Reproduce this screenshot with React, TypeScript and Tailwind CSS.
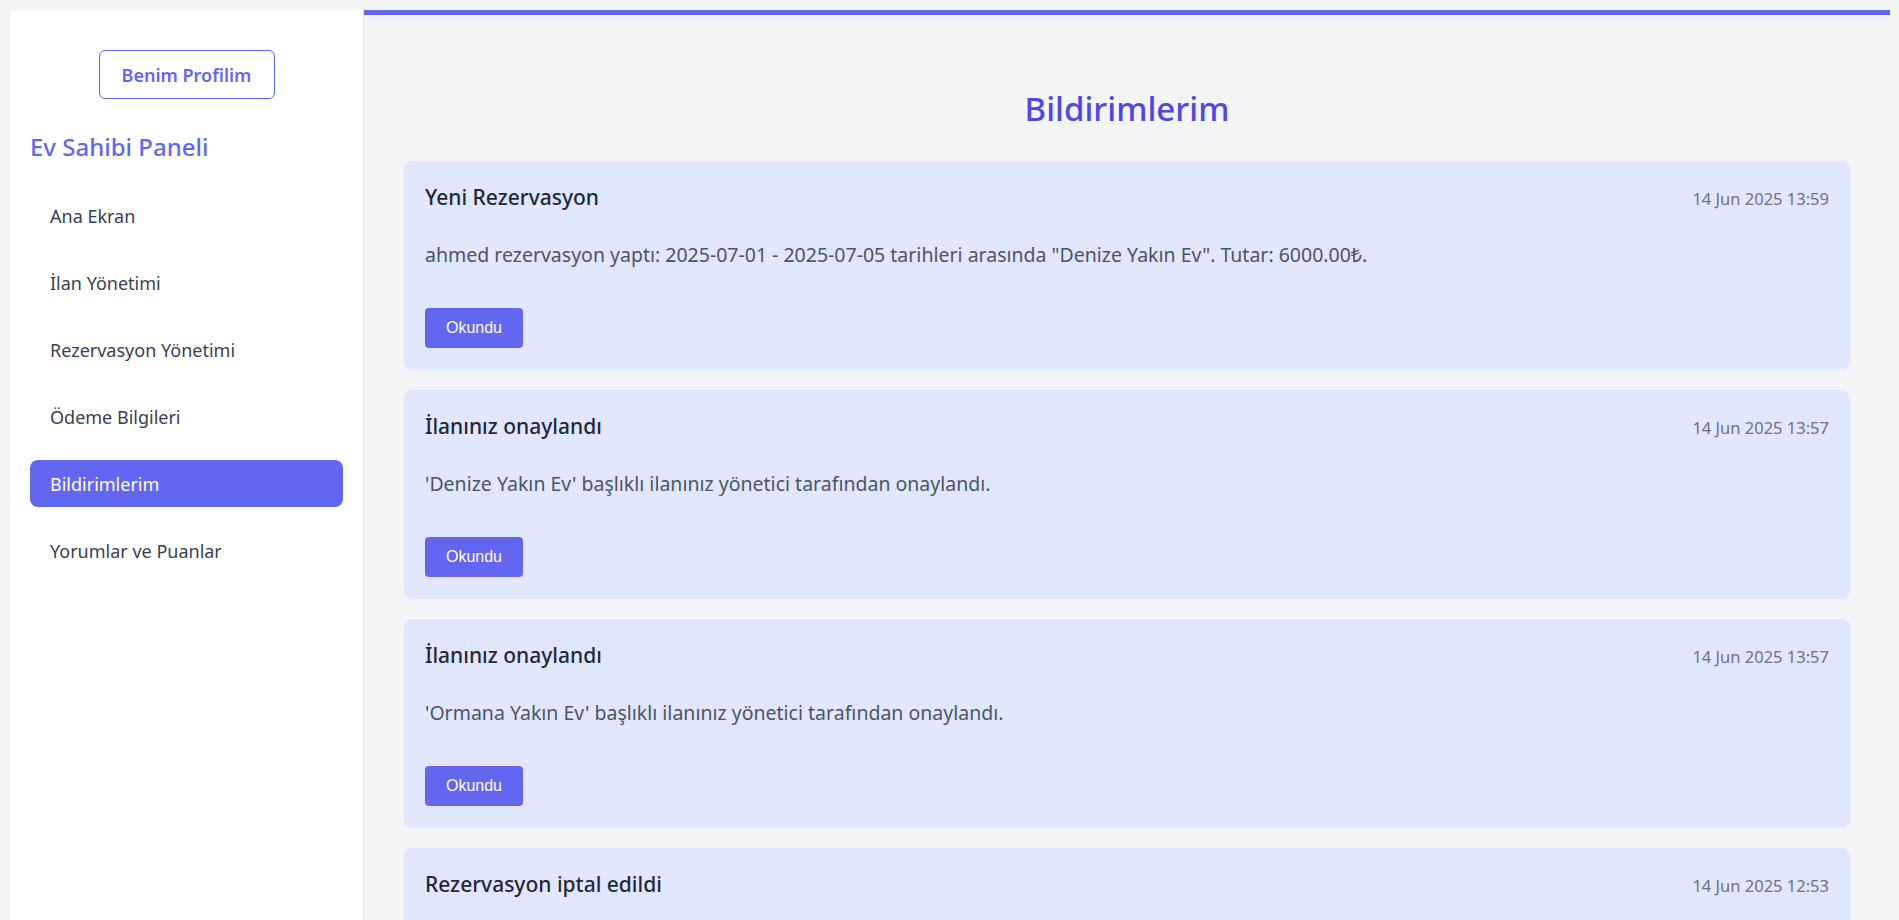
import { useState } from "react";

type Notice = {
  id: number;
  title: string;
  date: string;
  body: string;
};

const notices: Notice[] = [
  {
    id: 1,
    title: "Yeni Rezervasyon",
    date: "14 Jun 2025 13:59",
    body: 'ahmed rezervasyon yaptı: 2025-07-01 - 2025-07-05 tarihleri arasında "Denize Yakın Ev". Tutar: 6000.00₺.',
  },
  {
    id: 2,
    title: "İlanınız onaylandı",
    date: "14 Jun 2025 13:57",
    body: "'Denize Yakın Ev' başlıklı ilanınız yönetici tarafından onaylandı.",
  },
  {
    id: 3,
    title: "İlanınız onaylandı",
    date: "14 Jun 2025 13:57",
    body: "'Ormana Yakın Ev' başlıklı ilanınız yönetici tarafından onaylandı.",
  },
  {
    id: 4,
    title: "Rezervasyon iptal edildi",
    date: "14 Jun 2025 12:53",
    body: "Misafir rezervasyonunu iptal etti: 2025-06-20 - 2025-06-22 tarihleri arasında \"Denize Yakın Ev\".",
  },
];

const menuItems = [
  "Ana Ekran",
  "İlan Yönetimi",
  "Rezervasyon Yönetimi",
  "Ödeme Bilgileri",
  "Bildirimlerim",
  "Yorumlar ve Puanlar",
];

function Sidebar({ active, onSelect }: { active: string; onSelect: (item: string) => void }) {
  return (
    <aside className="w-[354px] shrink-0 bg-white border-r border-[#e5e7eb] px-5 pt-10">
      <div className="flex justify-center">
        <button className="h-[49px] w-[176px] rounded-md border border-[#6366f1] text-lg font-semibold text-[#6366f1]">
          Benim Profilim
        </button>
      </div>
      <h2 className="mt-[32px] text-2xl leading-8 font-medium text-[#6366f1]">Ev Sahibi Paneli</h2>
      <nav className="mt-[29px] flex flex-col gap-5">
        {menuItems.map((item) => (
          <a
            key={item}
            href="#"
            onClick={(e) => {
              e.preventDefault();
              onSelect(item);
            }}
            className={
              item === active
                ? "rounded-lg bg-[#6366f1] px-5 pt-[11px] pb-[9px] text-lg leading-[27px] text-white"
                : "rounded-lg px-5 pt-[11px] pb-[9px] text-lg leading-[27px] text-[#374151]"
            }
          >
            {item}
          </a>
        ))}
      </nav>
    </aside>
  );
}

function NoticeCard({ notice }: { notice: Notice }) {
  return (
    <div className="mb-[21px] rounded-lg bg-[#e0e7ff] px-[21px] pt-[22px] pb-[21px] shadow-[0_1px_2px_rgba(0,0,0,0.04)]">
      <div className="flex h-7 items-baseline justify-between">
        <h3 className="text-[21px] leading-7 font-medium text-[#1f2937]">{notice.title}</h3>
        <span className="text-[16.5px] leading-6 text-[#6b7280]">{notice.date}</span>
      </div>
      <p className="mt-[30px] text-[19.5px] leading-7 text-[#4b5563]">{notice.body}</p>
      <button className="mt-[39px] h-10 w-[98px] rounded bg-[#6366f1] font-['Liberation_Sans',Arial,sans-serif] text-base text-white">
        Okundu
      </button>
    </div>
  );
}

export default function App() {
  const [active, setActive] = useState("Bildirimlerim");

  return (
    <div className="flex min-h-screen bg-[#f3f4f6] pt-[10px] pl-[10px] pr-[9px] font-['Noto_Sans',sans-serif]">
      <Sidebar active={active} onSelect={setActive} />
      <main className="flex-1 border-t-[5px] border-[#6366f1] px-10 pb-10">
        <h1 className="pt-[74px] text-center text-[33px] leading-10 font-medium text-[#4f46e5]">Bildirimlerim</h1>
        <div className="mt-[32px]">
          {notices.map((n) => (
            <NoticeCard key={n.id} notice={n} />
          ))}
        </div>
      </main>
    </div>
  );
}
